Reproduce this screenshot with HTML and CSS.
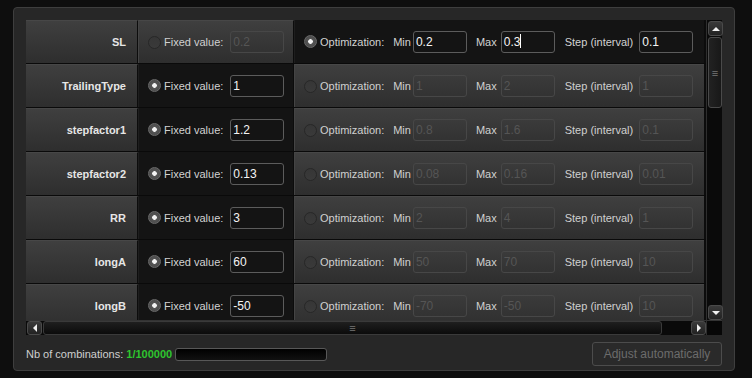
FILE: index.html
```html
<!DOCTYPE html>
<html lang="en">
  <head>
    <meta charset="UTF-8" />
    <title>Optimization parameters</title>
    <link rel="stylesheet" href="styles.css">
  </head>
  <body>
    <div class="panel">
      <div class="grid">
        <div class="rows">
          <div class="row">
            <div class="name">SL</div>
            <div class="cell fixed off">
              <span class="radio"></span><span class="lbl">Fixed value:</span>
              <div class="box">0.2</div>
            </div>
            <div class="cell opt on">
              <span class="radio checked"></span><span class="lbl">Optimization:</span>
              <span class="lbl min">Min</span><div class="box">0.2</div>
              <span class="lbl max">Max</span><div class="box">0.3<span class="caret"></span></div>
              <span class="lbl step">Step (interval)</span><div class="box">0.1</div>
            </div>
          </div>
          <div class="row">
            <div class="name">TrailingType</div>
            <div class="cell fixed on">
              <span class="radio checked"></span><span class="lbl">Fixed value:</span>
              <div class="box">1</div>
            </div>
            <div class="cell opt off">
              <span class="radio"></span><span class="lbl">Optimization:</span>
              <span class="lbl min">Min</span><div class="box">1</div>
              <span class="lbl max">Max</span><div class="box">2</div>
              <span class="lbl step">Step (interval)</span><div class="box">1</div>
            </div>
          </div>
          <div class="row">
            <div class="name">stepfactor1</div>
            <div class="cell fixed on">
              <span class="radio checked"></span><span class="lbl">Fixed value:</span>
              <div class="box">1.2</div>
            </div>
            <div class="cell opt off">
              <span class="radio"></span><span class="lbl">Optimization:</span>
              <span class="lbl min">Min</span><div class="box">0.8</div>
              <span class="lbl max">Max</span><div class="box">1.6</div>
              <span class="lbl step">Step (interval)</span><div class="box">0.1</div>
            </div>
          </div>
          <div class="row">
            <div class="name">stepfactor2</div>
            <div class="cell fixed on">
              <span class="radio checked"></span><span class="lbl">Fixed value:</span>
              <div class="box">0.13</div>
            </div>
            <div class="cell opt off">
              <span class="radio"></span><span class="lbl">Optimization:</span>
              <span class="lbl min">Min</span><div class="box">0.08</div>
              <span class="lbl max">Max</span><div class="box">0.16</div>
              <span class="lbl step">Step (interval)</span><div class="box">0.01</div>
            </div>
          </div>
          <div class="row">
            <div class="name">RR</div>
            <div class="cell fixed on">
              <span class="radio checked"></span><span class="lbl">Fixed value:</span>
              <div class="box">3</div>
            </div>
            <div class="cell opt off">
              <span class="radio"></span><span class="lbl">Optimization:</span>
              <span class="lbl min">Min</span><div class="box">2</div>
              <span class="lbl max">Max</span><div class="box">4</div>
              <span class="lbl step">Step (interval)</span><div class="box">1</div>
            </div>
          </div>
          <div class="row">
            <div class="name">longA</div>
            <div class="cell fixed on">
              <span class="radio checked"></span><span class="lbl">Fixed value:</span>
              <div class="box">60</div>
            </div>
            <div class="cell opt off">
              <span class="radio"></span><span class="lbl">Optimization:</span>
              <span class="lbl min">Min</span><div class="box">50</div>
              <span class="lbl max">Max</span><div class="box">70</div>
              <span class="lbl step">Step (interval)</span><div class="box">10</div>
            </div>
          </div>
          <div class="row">
            <div class="name">longB</div>
            <div class="cell fixed on">
              <span class="radio checked"></span><span class="lbl">Fixed value:</span>
              <div class="box">-50</div>
            </div>
            <div class="cell opt off">
              <span class="radio"></span><span class="lbl">Optimization:</span>
              <span class="lbl min">Min</span><div class="box">-70</div>
              <span class="lbl max">Max</span><div class="box">-50</div>
              <span class="lbl step">Step (interval)</span><div class="box">10</div>
            </div>
          </div>
        </div>

        <div class="vscroll">
          <div class="sbtn"><span class="arrow up"></span></div>
          <div class="vthumb"><span class="grip">&#8801;</span></div>
          <div class="vtrack"></div>
          <div class="sbtn"><span class="arrow down"></span></div>
        </div>

        <div class="hscroll">
          <div class="sbtn"><span class="arrow left"></span></div>
          <div class="hthumb"><span class="grip">&#8801;</span></div>
          <div class="htrack"></div>
          <div class="sbtn"><span class="arrow right"></span></div>
        </div>
        <div class="corner"></div>
      </div>

      <div class="footer">
        <span class="combo">Nb of combinations: <b>1/100000</b></span>
        <div class="progress"></div>
        <button class="adjust" type="button" disabled>Adjust automatically</button>
      </div>
    </div>
  </body>
</html>
```

FILE: styles.css
```css
* {
  box-sizing: border-box;
}

body {
  margin: 0;
  background-color: #0e0e0e;
  font-family: "Liberation Sans", Arial, sans-serif;
  font-size: 11px;
  color: #d2d2d2;
}

.panel {
  width: 722px;
  height: 364px;
  margin: 7px 0 0 13px;
  padding: 12px 12px 0 12px;
  background-color: #272727;
  border: 1px solid #3e3e3e;
  border-radius: 4px;
}

.grid {
  display: grid;
  grid-template-columns: 680px 16px;
  grid-template-rows: 300px 15px;
  background-color: #0a0a0a;
}

.rows {
  overflow: hidden;
  background-color: #0c0c0c;
}

.row {
  display: flex;
  height: 44px;
  border-bottom: 1px solid #0a0a0a;
}

.name {
  width: 112px;
  flex-shrink: 0;
  border-right: 1px solid #0c0c0c;
  border-top: 1px solid #474747;
  background: linear-gradient(#3f3f3f, #2e2e2e);
  color: #e6e6e6;
  font-weight: bold;
  text-align: right;
  padding-right: 11px;
  line-height: 42px;
}

.cell {
  display: flex;
  align-items: center;
  padding-left: 9px;
  flex-shrink: 0;
}

.fixed {
  width: 156px;
  border-right: 1px solid #0c0c0c;
  border-left: 1px solid #444;
}

.opt {
  width: 410px;
  border-left: 1px solid #444;
}

.on {
  background-color: #141414;
  border-left-color: #1e1e1e;
}

.off {
  background: linear-gradient(#3f3f3f, #2e2e2e);
  border-top: 1px solid #474747;
}

.radio {
  width: 13px;
  height: 13px;
  border-radius: 50%;
  border: 1px solid #272727;
  background: linear-gradient(#363636, #3a3a3a);
  margin-right: 3px;
  flex-shrink: 0;
}

.radio.checked {
  border-color: #6a6a6a;
  background: radial-gradient(circle, #f2f2f2 0, #f2f2f2 2px, #555 2.6px, #444 100%);
}

.lbl {
  white-space: nowrap;
}

.off .lbl {
  color: #d0d0d0;
}

.box {
  width: 54px;
  height: 22px;
  border: 1px solid #5c5c5c;
  border-radius: 3px;
  padding-left: 2px;
  line-height: 20px;
  font-size: 12px;
  color: #f4f4f4;
  flex-shrink: 0;
}

.off .box {
  border-color: #474747;
  color: #555;
}

.fixed .box {
  margin-left: 7px;
}

.opt .min {
  margin-left: 9px;
  margin-right: 2px;
}

.opt .max {
  margin-left: 9px;
  margin-right: 4px;
}

.opt .step {
  margin-left: 10px;
  margin-right: 6px;
}

.caret {
  display: inline-block;
  width: 1px;
  height: 14px;
  background-color: #fff;
  vertical-align: -2px;
}

/* scrollbars */
.vscroll {
  display: flex;
  flex-direction: column;
  padding: 1px 0 0 1px;
  background-color: #0a0a0a;
  border-left: 1px solid #2e2e2e;
}

.hscroll {
  display: flex;
  padding: 0 0 0 1px;
  background-color: #0a0a0a;
  border-top: 1px solid #333;
}

.sbtn {
  width: 15px;
  height: 15px;
  flex-shrink: 0;
  border: 1px solid #4a4a4a;
  border-radius: 3px;
  background: linear-gradient(#3a3a3a, #222);
  display: flex;
  align-items: center;
  justify-content: center;
}

.hscroll .sbtn {
  height: 14px;
}

.arrow {
  width: 0;
  height: 0;
  border: 4px solid transparent;
}

.arrow.up {
  border-bottom: 4px solid #f0f0f0;
  border-top-width: 0;
}

.arrow.down {
  border-top: 4px solid #f0f0f0;
  border-bottom-width: 0;
}

.arrow.left {
  border-right: 4px solid #f0f0f0;
  border-left-width: 0;
}

.arrow.right {
  border-left: 4px solid #f0f0f0;
  border-right-width: 0;
}

.vthumb {
  height: 71px;
  margin-top: 1px;
  border: 1px solid #4a4a4a;
  border-radius: 3px;
  background: linear-gradient(90deg, #222, #181818);
  display: flex;
  align-items: center;
  justify-content: center;
}

.vtrack,
.htrack {
  flex: 1;
}

.hthumb {
  width: 619px;
  margin-left: 1px;
  border: 1px solid #3a3a3a;
  border-radius: 3px;
  background: linear-gradient(#1f1f1f, #0b0b0b);
  display: flex;
  align-items: center;
  justify-content: center;
}

.grip {
  color: #777;
  font-size: 11px;
  line-height: 10px;
}

.corner {
  background-color: #070707;
  border-left: 1px solid #2e2e2e;
  border-top: 1px solid #333;
}

.footer {
  display: flex;
  align-items: center;
  height: 35px;
  padding-top: 3px;
}

.combo {
  color: #cfcfcf;
}

.combo b {
  color: #2ec52e;
}

.progress {
  width: 152px;
  height: 13px;
  margin-left: 3px;
  background: linear-gradient(#000, #111);
  border: 1px solid #585858;
  border-radius: 3px;
}

.adjust {
  margin-left: auto;
  width: 130px;
  height: 24px;
  background: #2a2a2a;
  border: 1px solid #4c4c4c;
  border-radius: 3px;
  color: #6c6c6c;
  font-family: "Liberation Sans", Arial, sans-serif;
  font-size: 12px;
}
```
